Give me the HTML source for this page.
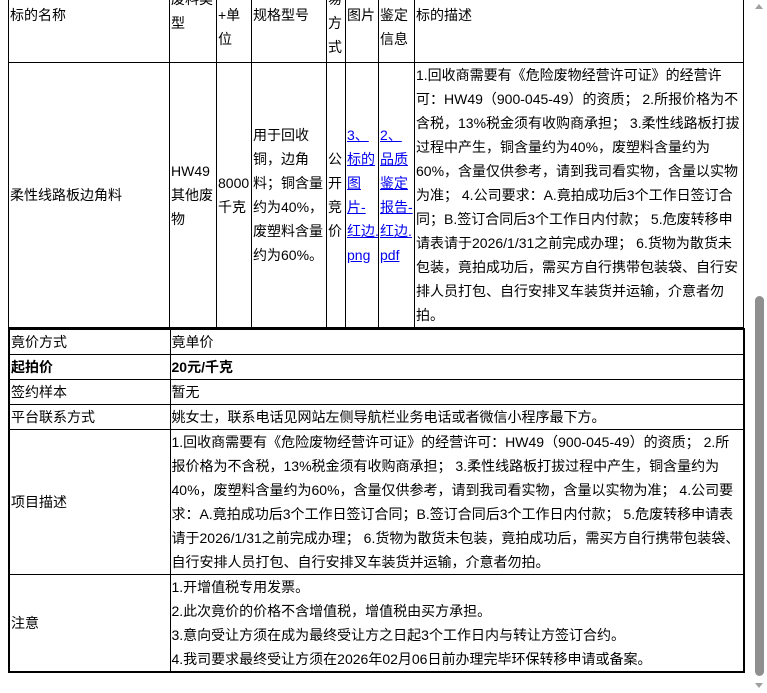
<!DOCTYPE html>
<html><head><meta charset="utf-8"><style>
html,body{margin:0;padding:0;width:767px;height:693px;overflow:hidden;background:#fff;}
body{font-family:"Liberation Sans","Noto Sans CJK SC",sans-serif;font-size:14px;color:#000;position:relative;}
#w{position:absolute;left:8px;top:-14px;width:735px;}
table{border-collapse:collapse;table-layout:fixed;width:735px;}
td{border:1px solid #000;padding:0 1px;line-height:24px;vertical-align:middle;overflow:hidden;}
#t1 tr.h td{vertical-align:top;}
#t2{border:2px solid #000;}
#t2 td{height:24px;}
a{color:#00e;text-decoration:underline;white-space:nowrap;}
.sb{position:absolute;left:752px;top:0;width:15px;height:693px;background:#fff;}
.th{position:absolute;left:755px;top:296px;width:9px;height:380px;background:#8f8f8f;border-radius:5px;}
.up{position:absolute;left:755px;top:4px;width:0;height:0;border-left:4.5px solid transparent;border-right:4.5px solid transparent;border-bottom:5px solid #a0a0a0;}
.dn{position:absolute;left:755px;top:683px;width:0;height:0;border-left:4.5px solid transparent;border-right:4.5px solid transparent;border-top:5px solid #a0a0a0;}
</style></head><body>
<div id="w">
<table id="t1">
<colgroup><col style="width:161px"><col style="width:47px"><col style="width:35px"><col style="width:75px"><col style="width:19px"><col style="width:33px"><col style="width:36px"><col style="width:329px"></colgroup>
<tr class="h" style="height:76px">
<td style="padding-top:16px">标的名称</td>
<td>废料类<br>型</td>
<td style="padding-top:16px">+单<br>位</td>
<td style="padding-top:16px">规格型号</td>
<td>易<br>方<br>式</td>
<td style="padding-top:16px">图片</td>
<td style="padding-top:16px">鉴定<br>信息</td>
<td style="padding-top:16px">标的描述</td>
</tr>
<tr style="height:265px">
<td>柔性线路板边角料</td>
<td>HW49<br>其他废<br>物</td>
<td>8000<br>千克</td>
<td>用于回收<br>铜，边角<br>料；铜含量<br>约为40%，<br>废塑料含量<br>约为60%。</td>
<td>公<br>开<br>竞<br>价</td>
<td><a>3、</a><br><a>标的</a><br><a>图</a><br><a>片-</a><br><a>红边.</a><br><a>png</a></td>
<td><a>2、</a><br><a>品质</a><br><a>鉴定</a><br><a>报告-</a><br><a>红边.</a><br><a>pdf</a></td>
<td>1.回收商需要有《危险废物经营许可证》的经营许可：HW49（900-045-49）的资质； 2.所报价格为不含税，13%税金须有收购商承担； 3.柔性线路板打拔过程中产生，铜含量约为40%，废塑料含量约为60%，含量仅供参考，请到我司看实物，含量以实物为准； 4.公司要求：A.竟拍成功后3个工作日签订合同；B.签订合同后3个工作日内付款； 5.危废转移申请表请于2026/1/31之前完成办理； 6.货物为散货未包装，竟拍成功后，需买方自行携带包装袋、自行安排人员打包、自行安排叉车装货并运输，介意者勿拍。</td>
</tr>
</table>
<table id="t2">
<colgroup><col style="width:161px"><col style="width:574px"></colgroup>
<tr><td>竟价方式</td><td>竟单价</td></tr>
<tr><td><b>起拍价</b></td><td><b>20元/千克</b></td></tr>
<tr><td>签约样本</td><td>暂无</td></tr>
<tr><td>平台联系方式</td><td>姚女士，联系电话见网站左侧导航栏业务电话或者微信小程序最下方。</td></tr>
<tr><td>项目描述</td><td>1.回收商需要有《危险废物经营许可证》的经营许可：HW49（900-045-49）的资质； 2.所报价格为不含税，13%税金须有收购商承担； 3.柔性线路板打拔过程中产生，铜含量约为40%，废塑料含量约为60%，含量仅供参考，请到我司看实物，含量以实物为准； 4.公司要求：A.竟拍成功后3个工作日签订合同；B.签订合同后3个工作日内付款； 5.危废转移申请表请于2026/1/31之前完成办理； 6.货物为散货未包装，竟拍成功后，需买方自行携带包装袋、自行安排人员打包、自行安排叉车装货并运输，介意者勿拍。</td></tr>
<tr><td>注意</td><td>1.开增值税专用发票。<br>2.此次竟价的价格不含增值税，增值税由买方承担。<br>3.意向受让方须在成为最终受让方之日起3个工作日内与转让方签订合约。<br>4.我司要求最终受让方须在2026年02月06日前办理完毕环保转移申请或备案。</td></tr>
</table>
</div>
<div class="sb"></div><div class="th"></div><div class="up"></div><div class="dn"></div>
</body></html>
